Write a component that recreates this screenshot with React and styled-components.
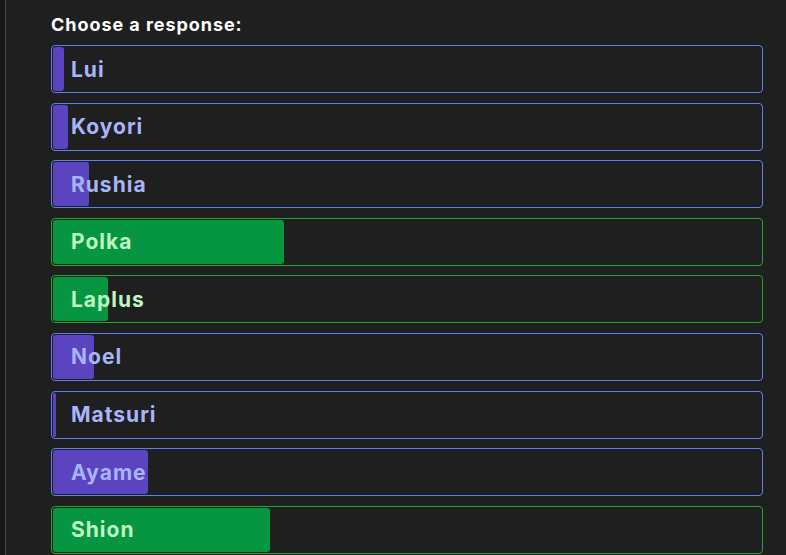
import React from "react";
import styled, { createGlobalStyle } from "styled-components";

const Global = createGlobalStyle`
  html, body { margin: 0; padding: 0; background: #1f1f1f; }
  body { font-family: Inter, "Noto Sans", sans-serif; }
`;

const Page = styled.div`
  display: flex;
  min-height: 555px;
  background: #1f1f1f;
`;

const Rail = styled.div`
  width: 5px;
  flex: none;
  background: #161616;
  border-right: 1px solid #4a4a4a;
`;

const Content = styled.div`
  flex: 1;
  padding: 13px 23px 0 45px;
`;

const Title = styled.h2`
  margin: 0 0 9px;
  font-size: 18px;
  line-height: 23px;
  font-weight: 700;
  letter-spacing: 0.95px;
  color: #ffffff;
`;

const List = styled.div`
  display: flex;
  flex-direction: column;
  gap: 9.6px;
`;

const Option = styled.div`
  position: relative;
  height: 48px;
  box-sizing: border-box;
  border: 1px solid ${(p) => (p.$win ? "#22a62a" : "#5f7ef2")};
  border-radius: 4px;
  padding: 1px;
  display: flex;
  align-items: center;
  background: #1f1f1f;
`;

const Fill = styled.div`
  position: absolute;
  left: 1px;
  top: 1px;
  bottom: 1px;
  border-radius: 3px;
  background: ${(p) => (p.$win ? "#069642" : "#5a44bf")};
`;

const Label = styled.span`
  position: relative;
  padding-left: 18px;
  font-size: 21px;
  font-weight: 700;
  letter-spacing: 1px;
  color: ${(p) => (p.$win ? "#bef7c4" : "#a7b5fb")};
`;

const options = [
  { name: "Lui", pct: 1.6 },
  { name: "Koyori", pct: 2.1 },
  { name: "Rushia", pct: 5.1 },
  { name: "Polka", pct: 32.6, win: true },
  { name: "Laplus", pct: 7.8, win: true },
  { name: "Noel", pct: 5.8 },
  { name: "Matsuri", pct: 0.4 },
  { name: "Ayame", pct: 13.4 },
  { name: "Shion", pct: 30.5, win: true },
];

export default function App() {
  return (
    <Page>
      <Global />
      <Rail />
      <Content>
        <Title>Choose a response:</Title>
        <List>
          {options.map((o) => (
            <Option key={o.name} $win={o.win}>
              <Fill $win={o.win} style={{ width: `${o.pct}%` }} />
              <Label $win={o.win}>{o.name}</Label>
            </Option>
          ))}
        </List>
      </Content>
    </Page>
  );
}
